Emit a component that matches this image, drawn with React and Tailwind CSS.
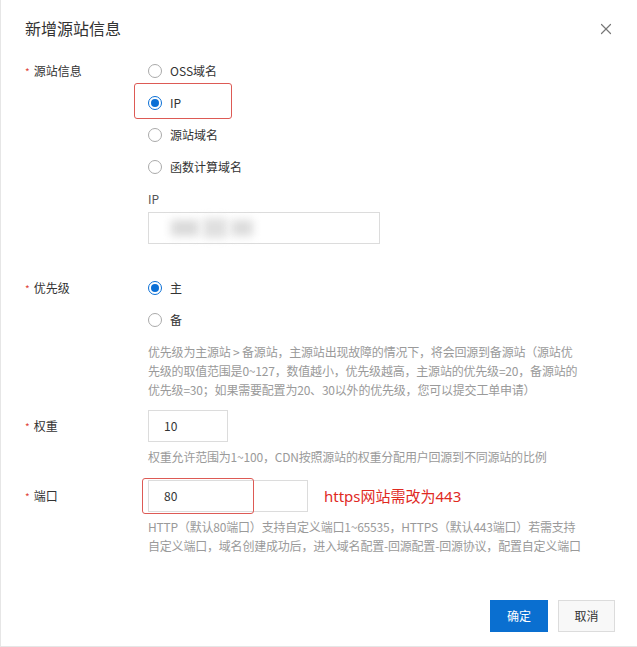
import { X } from 'lucide-react';

const font = "font-['Noto_Sans_CJK_SC',sans-serif]";

function Radio({ checked, label }) {
  return (
    <div className="flex items-center h-8">
      {checked ? (
        <span className="w-[14px] h-[14px] rounded-full border border-[#0a6fd6] flex items-center justify-center">
          <span className="w-[8px] h-[8px] rounded-full bg-[#0a6fd6]" />
        </span>
      ) : (
        <span className="w-[14px] h-[14px] rounded-full border border-[#aaa] bg-white" />
      )}
      <span className="ml-[8px] text-[12px] text-[#333] leading-4">{label}</span>
    </div>
  );
}

function Label({ children }) {
  return (
    <div className="w-[123px] shrink-0 h-8 flex items-center text-[12px] text-[#333]">
      <span className="text-[#e0453a] mr-[4px] text-[10px]">*</span>
      {children}
    </div>
  );
}

const help = "text-[12px] text-[#9a9a9a] leading-[19px] tracking-[-0.2px]";

export default function App() {
  return (
    <div className={`w-[637px] h-[647px] bg-white border-l border-b border-[#e6e6e6] ${font}`}>
      <div className="pl-[24px] pr-[20px] pt-[18px]">
        <div className="flex items-center justify-between">
          <h1 className="text-[16px] leading-5 text-[#333]">新增源站信息</h1>
          <X size={18} strokeWidth={1.6} className="text-[#777] mr-[2px] mt-[2px]" />
        </div>

        <div className="mt-[17px] flex">
          <Label>源站信息</Label>
          <div>
            <Radio label="OSS域名" />
            <div className="relative">
              <Radio checked label="IP" />
              <div className="absolute left-[-14px] top-[-4px] w-[98px] h-[36px] border-[1.5px] border-[#dd5a55] rounded-[3px]" />
            </div>
            <Radio label="源站域名" />
            <Radio label="函数计算域名" />
            <div className="mt-[8px] text-[12px] leading-4 text-[#555]">IP</div>
            <div className="mt-[5px] w-[232px] h-[32px] border border-[#dcdcdc] flex items-center pl-[22px] gap-[4px]">
              <span className="w-[28px] h-[16px] bg-[#dadada] blur-[4px]" />
              <span className="w-[24px] h-[20px] bg-[#e0e0e0] blur-[4px]" />
              <span className="w-[22px] h-[16px] bg-[#dcdcdc] blur-[4px]" />
            </div>
          </div>
        </div>

        <div className="mt-[28px] flex">
          <Label>优先级</Label>
          <div>
            <Radio checked label="主" />
            <Radio label="备" />
            <div className={`mt-[6px] ${help}`}>
              <div>优先级为主源站 &gt; 备源站，主源站出现故障的情况下，将会回源到备源站（源站优</div>
              <div>先级的取值范围是0~127，数值越小，优先级越高，主源站的优先级=20，备源站的</div>
              <div>优先级=30；如果需要配置为20、30以外的优先级，您可以提交工单申请）</div>
            </div>
          </div>
        </div>

        <div className="mt-[11px] flex">
          <Label>权重</Label>
          <div>
            <div className="w-[80px] h-8 border border-[#dcdcdc] flex items-center pl-[15px] text-[12px] text-[#333]">10</div>
            <div className={`mt-[5px] ${help}`}>权重允许范围为1~100，CDN按照源站的权重分配用户回源到不同源站的比例</div>
          </div>
        </div>

        <div className="mt-[14px] flex">
          <Label>端口</Label>
          <div>
            <div className="flex items-center">
              <div className="relative">
                <div className="w-[160px] h-8 border border-[#dcdcdc] flex items-center pl-[15px] text-[12px] text-[#333]">80</div>
                <div className="absolute left-[-6px] top-[-2px] w-[112px] h-[36px] border-[1.5px] border-[#dd5a55] rounded-[3px]" />
              </div>
              <span className="ml-[16px] text-[15px] text-[#e02a1f] font-['Noto_Sans','Noto_Sans_CJK_SC',sans-serif]">https网站需改为443</span>
            </div>
            <div className={`mt-[5px] ${help}`}>
              <div>HTTP（默认80端口）支持自定义端口1~65535，HTTPS（默认443端口）若需支持</div>
              <div>自定义端口，域名创建成功后，进入域名配置-回源配置-回源协议，配置自定义端口</div>
            </div>
          </div>
        </div>

        <div className="mt-[45px] flex justify-end gap-[10px] pr-[2px]">
          <button className="w-[58px] h-8 bg-[#0a6fd0] text-white text-[12px]">确定</button>
          <button className="w-[57px] h-8 bg-[#f8f8f8] border border-[#dcdcdc] text-[#333] text-[12px]">取消</button>
        </div>
      </div>
    </div>
  );
}
